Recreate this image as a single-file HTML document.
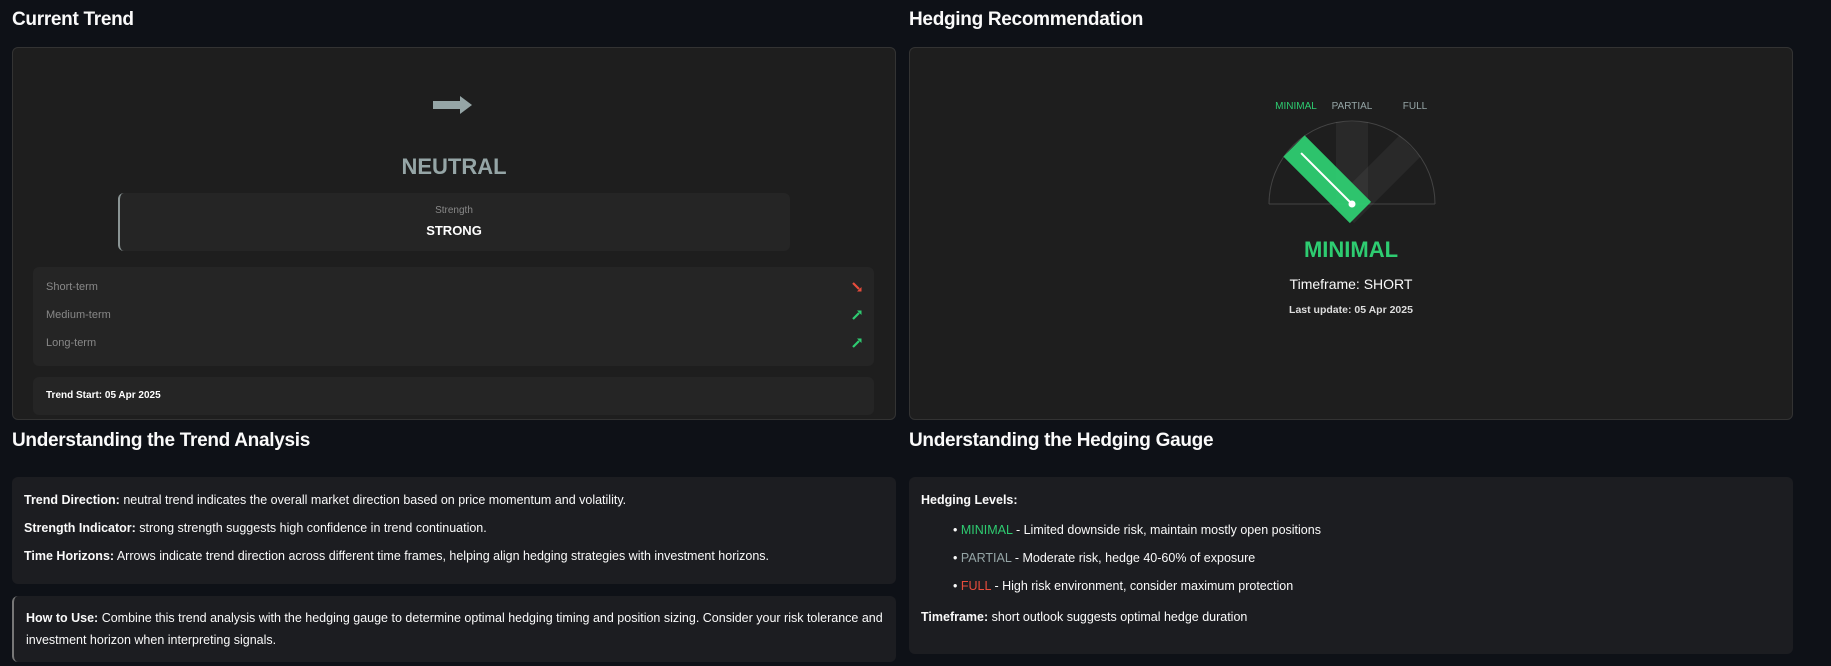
<!DOCTYPE html>
<html><head><meta charset="utf-8"><style>
*{box-sizing:border-box;margin:0;padding:0}
body{width:1831px;height:666px;background:#0e1117;font-family:"Liberation Sans",sans-serif;color:#fafafa;position:relative;overflow:hidden}
.abs{position:absolute}
h2{position:absolute;font-size:19px;font-weight:bold;color:#fafafa;letter-spacing:-0.3px}
.card{position:absolute;background:#1e1e1e;border:1px solid #333;border-radius:6px}
.box{position:absolute;background:#252525;border-radius:6px}
.c{text-align:center}
.info{position:absolute;background:#1c1d21;border-radius:6px;font-size:12.5px;color:#fafafa}
.info p{position:absolute;left:12px;white-space:nowrap}
</style></head><body>
<h2 style="left:12px;top:9px">Current Trend</h2>
<h2 style="left:909px;top:9px">Hedging Recommendation</h2>

<div class="card" style="left:12px;top:47px;width:884px;height:373px"></div>
<svg class="abs" style="left:432px;top:95px" width="42" height="20" viewBox="0 0 42 20"><rect x="1" y="6" width="28" height="8" fill="#95a5a6"/><polygon points="28,1 40,10 28,19" fill="#95a5a6"/></svg>
<div class="abs c" style="left:12px;width:884px;top:154px;font-size:22px;font-weight:bold;color:#95a5a6">NEUTRAL</div>
<div class="box" style="left:118px;top:193px;width:672px;height:58px;border-left:2px solid #8a9494"></div>
<div class="abs c" style="left:118px;width:672px;top:205px;font-size:10px;color:#888">Strength</div>
<div class="abs c" style="left:118px;width:672px;top:223px;font-size:13px;font-weight:bold;color:#fff">STRONG</div>
<div class="box" style="left:33px;top:267px;width:841px;height:99px"></div>
<div class="abs" style="left:46px;top:281px;font-size:11px;color:#888">Short-term</div>
<div class="abs" style="left:46px;top:309px;font-size:11px;color:#888">Medium-term</div>
<div class="abs" style="left:46px;top:337px;font-size:11px;color:#888">Long-term</div>
<svg class="abs" style="left:851px;top:281px" width="12" height="12"><line x1="2" y1="2" x2="8" y2="8" stroke="#e74c3c" stroke-width="2.2"/><polygon points="6,10.5 10.5,10.5 10.5,6" fill="#e74c3c"/></svg>
<svg class="abs" style="left:851px;top:309px" width="12" height="12"><line x1="2" y1="10" x2="8" y2="4" stroke="#2ecc71" stroke-width="2.2"/><polygon points="6,1.5 10.5,1.5 10.5,6" fill="#2ecc71"/></svg>
<svg class="abs" style="left:851px;top:337px" width="12" height="12"><line x1="2" y1="10" x2="8" y2="4" stroke="#2ecc71" stroke-width="2.2"/><polygon points="6,1.5 10.5,1.5 10.5,6" fill="#2ecc71"/></svg>
<div class="box" style="left:33px;top:377px;width:841px;height:38px"></div>
<div class="abs" style="left:46px;top:390px;font-size:10px;font-weight:bold;color:#fff">Trend Start: 05 Apr 2025</div>

<div class="card" style="left:909px;top:47px;width:884px;height:373px"></div>
<svg class="abs" style="left:1252px;top:95px" width="200" height="130" viewBox="1252 95 200 130" font-family="Liberation Sans, sans-serif" font-size="10">
<text x="1296" y="109" fill="#2ecc71" text-anchor="middle">MINIMAL</text>
<text x="1352" y="109" fill="#95a5a6" text-anchor="middle">PARTIAL</text>
<text x="1415" y="109" fill="#95a5a6" text-anchor="middle">FULL</text>
<path d="M1269 204 A83 83 0 0 1 1435 204" fill="none" stroke="#444" stroke-width="1"/>
<line x1="1269" y1="204" x2="1435" y2="204" stroke="#444"/>
<g transform="translate(1352 204)">
<rect x="-16" y="-82" width="32" height="82" fill="rgba(255,255,255,0.05)"/>
<rect x="-15" y="-82" width="30" height="94" fill="rgba(255,255,255,0.05)" transform="rotate(45)"/>
<rect x="-15" y="-82" width="30" height="94" fill="#2ecc71" opacity="0.95" transform="rotate(-45)"/>
<line x1="0" y1="0" x2="0" y2="-72" stroke="#fff" stroke-width="2" transform="rotate(-45)"/>
<circle cx="0" cy="0" r="3.5" fill="#fff"/>
</g>
</svg>
<div class="abs c" style="left:909px;width:884px;top:237px;font-size:22px;font-weight:bold;color:#2ecc71">MINIMAL</div>
<div class="abs c" style="left:909px;width:884px;top:276px;font-size:14px;color:#fafafa">Timeframe: SHORT</div>
<div class="abs c" style="left:909px;width:884px;top:304px;font-size:10.5px;font-weight:bold;color:#ddd">Last update: 05 Apr 2025</div>

<h2 style="left:12px;top:430px">Understanding the Trend Analysis</h2>
<h2 style="left:909px;top:430px">Understanding the Hedging Gauge</h2>

<div class="info" style="left:12px;top:477px;width:884px;height:107px">
<p style="top:16px"><b>Trend Direction:</b> neutral trend indicates the overall market direction based on price momentum and volatility.</p>
<p style="top:44px"><b>Strength Indicator:</b> strong strength suggests high confidence in trend continuation.</p>
<p style="top:72px"><b>Time Horizons:</b> Arrows indicate trend direction across different time frames, helping align hedging strategies with investment horizons.</p>
</div>
<div class="info" style="left:12px;top:596px;width:884px;height:66px;border-left:2px solid #777">
<p style="top:15px"><b>How to Use:</b> Combine this trend analysis with the hedging gauge to determine optimal hedging timing and position sizing. Consider your risk tolerance and</p>
<p style="top:37px">investment horizon when interpreting signals.</p>
</div>
<div class="info" style="left:909px;top:477px;width:884px;height:177px">
<p style="top:16px"><b>Hedging Levels:</b></p>
<p style="left:44px;top:46px">• <span style="color:#2ecc71">MINIMAL</span> - Limited downside risk, maintain mostly open positions</p>
<p style="left:44px;top:74px">• <span style="color:#95a5a6">PARTIAL</span> - Moderate risk, hedge 40-60% of exposure</p>
<p style="left:44px;top:102px">• <span style="color:#e74c3c">FULL</span> - High risk environment, consider maximum protection</p>
<p style="top:133px"><b>Timeframe:</b> short outlook suggests optimal hedge duration</p>
</div>
</body></html>
